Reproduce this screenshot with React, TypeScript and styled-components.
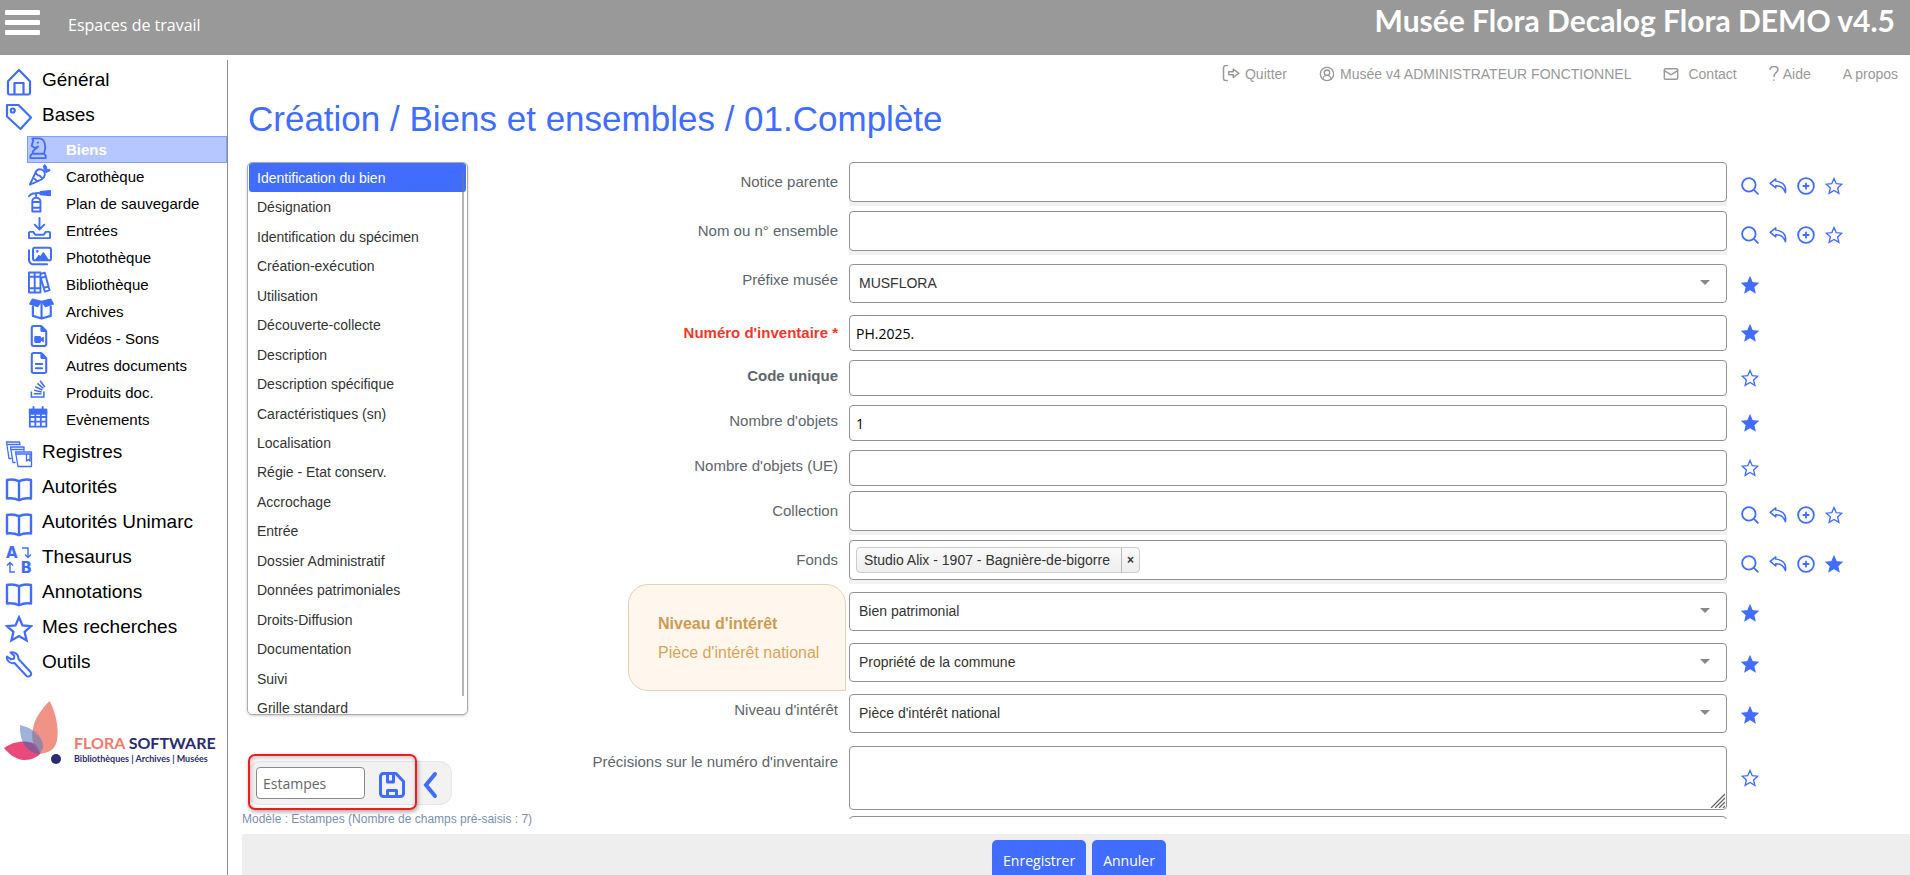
import React from "react";
import styled, { createGlobalStyle, css } from "styled-components";
import { FaRegImages, FaRegFileVideo, FaRegFileLines, FaStackOverflow } from "react-icons/fa6";
import { CircleUserRound, Mail } from "lucide-react";

const blue = "#416dff";
const sans = `"Liberation Sans", Arial, sans-serif`;
const humanist = `"Open Sans", "Noto Sans", sans-serif`;

const GlobalStyle = createGlobalStyle`
  * { box-sizing: border-box; }
  body { margin: 0; background: #fff; font-family: ${sans}; font-size: 14px; color: #333; }
  ul { list-style: none; margin: 0; padding: 0; }
  a { color: inherit; text-decoration: none; }
  button { padding: 0; border: 0; background: none; cursor: pointer; font: inherit; }
  svg { display: block; flex: none; }
`;

const Page = styled.div`
  display: flex;
  flex-direction: column;
  height: 100vh;
  overflow: hidden;
`;

/* ---------- header ---------- */

const Header = styled.header`
  display: flex;
  justify-content: space-between;
  flex: none;
  height: 55px;
  padding: 0 15px 0 5px;
  background: #999;
  color: #fff;
`;
const HeaderLeft = styled.div`
  display: flex;
  align-items: flex-start;
  gap: 28px;
  padding-top: 10px;
`;
const MenuButton = styled.button`
  display: flex;
  flex-direction: column;
  gap: 5px;
  width: 35px;
`;
const MenuBar = styled.span`
  height: 5px;
  width: 100%;
  border-radius: 1px;
  background: #fff;
`;
const Workspace = styled.a`
  font: 16px/30px ${humanist};
`;
const SiteName = styled.div`
  font: bold 30px/40px Lato, sans-serif;
`;

/* ---------- side menu ---------- */

const Columns = styled.div`
  display: flex;
  flex: 1;
  min-height: 0;
`;
const Sidebar = styled.nav`
  flex: none;
  width: 228px;
  margin-top: 5px;
  border-right: 1px solid #8f8f8f;
  color: #000;
`;
const SectionLink = styled.a`
  display: flex;
  gap: 9px;
  height: 35px;
  padding-left: 5px;
  font-size: 19px;
  svg { margin-top: 8px; color: ${blue}; }
`;
const SectionText = styled.span`
  padding-top: 5px;
  line-height: 29px;
  white-space: nowrap;
`;
const SubMenu = styled.ul`
  margin: 6px 0 -1px 27px;
`;
const SubLink = styled.a<{ $active?: boolean }>`
  display: flex;
  align-items: flex-start;
  height: 27px;
  padding-left: 1px;
  font-size: 15px;
  line-height: 25px;
  ${(p) => p.$active && css`
    background: #b5c7fe;
    box-shadow: inset 0 0 0 1px #7f9dfb;
    color: #fff;
    font-weight: bold;
  `}
`;
const SubIcon = styled.span`
  width: 38px;
  color: ${blue};
`;
const SubText = styled.span`
  padding-top: 1px;
`;
const Brand = styled.a`
  display: flex;
  align-items: flex-end;
  gap: 12px;
  margin-top: 22px;
  padding-left: 2px;
`;
const BrandText = styled.span`
  display: flex;
  flex-direction: column;
  padding-bottom: 1px;
  color: #2b2c6f;
`;
const BrandName = styled.span`
  font: bold 16px/18px Lato, sans-serif;
  white-space: nowrap;
  em { font-style: normal; color: #f0796c; }
`;
const BrandTag = styled.span`
  font: bold 9px/14px Lato, sans-serif;
  white-space: nowrap;
`;

/* ---------- main area ---------- */

const Main = styled.main`
  display: flex;
  flex-direction: column;
  flex: 1;
  min-width: 0;
  padding: 9px 0 0 14px;
`;
const UserNav = styled.nav`
  display: flex;
  justify-content: flex-end;
  gap: 32px;
  padding-right: 12px;
  color: #999;
  line-height: 20px;
`;
const UserLink = styled.a<{ $gap?: number }>`
  display: flex;
  align-items: center;
  gap: ${(p) => p.$gap ?? 5}px;
`;
const Title = styled.h1`
  margin: 15px 0 23px 6px;
  font-size: 35px;
  font-weight: normal;
  line-height: 40px;
  color: ${blue};
`;
const Body = styled.div`
  display: flex;
  flex: 1;
  min-height: 0;
`;
const Aside = styled.div`
  display: flex;
  flex-direction: column;
  flex: none;
  width: 226px;
  padding-bottom: 6px;
`;
const TabBox = styled.div`
  position: relative;
  flex: 1;
  min-height: 0;
  margin-left: 5px;
  padding: 0 1px;
  overflow: hidden;
  border: 1px solid #aaa;
  border-radius: 5px;
  box-shadow: 0 1px 3px rgba(0, 0, 0, 0.2);
`;
const TabList = styled.ul`
  display: grid;
  grid-template-rows: repeat(19, 1fr);
  height: 560px;
`;
const TabLink = styled.a<{ $active?: boolean }>`
  display: flex;
  align-items: center;
  height: 100%;
  padding-left: 8px;
  border-radius: 3px;
  ${(p) => p.$active && css`
    background: ${blue};
    color: #fff;
  `}
`;
const ScrollThumb = styled.div`
  position: absolute;
  top: 10px;
  right: 3px;
  bottom: 18px;
  width: 2px;
  background: rgba(120, 120, 120, 0.55);
`;
const ModelBar = styled.form`
  position: relative;
  display: flex;
  align-items: center;
  gap: 13px;
  width: 204px;
  height: 44px;
  margin: 46px 0 5px 6px;
  padding-left: 7px;
  border: 1px solid #e6e6e6;
  border-radius: 12px;
  background: #f2f2f2;
`;
const ModelInput = styled.input`
  width: 109px;
  height: 32px;
  padding: 0 6px;
  border: 1px solid #8a8a8a;
  border-radius: 4px;
  background: #fff;
  color: #666;
  font: 14px ${humanist};
`;
const ModelButton = styled.button`
  padding-top: 3px;
  color: ${blue};
`;
const Highlight = styled.span`
  position: absolute;
  inset: -8px 34px -6px -1px;
  border: 2px solid #ee1c1c;
  border-radius: 7px;
  box-shadow: 1px 2px 4px rgba(0, 0, 0, 0.35), inset 1px 2px 5px rgba(0, 0, 0, 0.22);
  pointer-events: none;
`;
const ModelNote = styled.p`
  margin: 0;
  font-size: 12px;
  line-height: 18px;
  color: #7b8fb0;
  white-space: nowrap;
`;

/* ---------- form ---------- */

const Form = styled.form`
  flex: 1;
  min-width: 0;
  margin-bottom: 15px;
  overflow: hidden;
`;
const Group = styled.div<{ $before?: number; $gap?: number }>`
  position: relative;
  display: flex;
  flex-direction: column;
  gap: ${(p) => p.$gap ?? 0}px;
  margin-top: ${(p) => p.$before ?? 0}px;
`;
const Row = styled.div`
  display: grid;
  grid-template-columns: 370px minmax(0, 1fr) 168px;
  column-gap: 11px;
  padding-right: 4px;
`;
const Label = styled.label<{ $tone?: "strong" | "required"; $low?: boolean }>`
  padding-top: ${(p) => (p.$low ? 10 : 6)}px;
  font-size: 15px;
  line-height: 20px;
  text-align: right;
  color: #5d666b;
  ${(p) => p.$tone && css`font-weight: bold;`}
  ${(p) => p.$tone === "required" && css`color: #f0382b; padding-top: 8px;`}
`;
const control = css`
  display: block;
  width: 100%;
  border: 1px solid #929292;
  border-radius: 4px;
  background: #fff;
`;
const TextInput = styled.input`
  ${control}
  height: 36px;
  padding: 0 6px;
  color: #000;
  font: 14px ${humanist};
`;
const LookupShell = styled.div`
  padding-bottom: 4px;
  background: linear-gradient(#fff 50%, #f1f1f1 50%);
`;
const LookupBox = styled.div`
  ${control}
  display: flex;
  align-items: center;
  height: 40px;
  padding: 0 6px;
`;
const LookupInput = styled.input`
  flex: 1;
  min-width: 0;
  height: 30px;
  border: 0;
  outline: 0;
  background: none;
  font: 14px ${sans};
`;
const Chip = styled.span`
  display: flex;
  height: 26px;
  border: 1px solid #ccc;
  border-radius: 4px;
  background: linear-gradient(#fafafa, #eee);
  line-height: 24px;
  white-space: nowrap;
`;
const ChipText = styled.span`
  padding: 0 11px 0 7px;
`;
const ChipClose = styled.button`
  width: 18px;
  border-left: 1px solid #bbb;
  font-size: 12px;
  font-weight: bold;
  line-height: 24px;
  color: #333;
`;
const SelectShell = styled.div`
  position: relative;
`;
const Select = styled.select`
  ${control}
  height: 39px;
  padding: 0 30px 1px 9px;
  appearance: none;
  color: #333;
  font: 14px ${sans};
`;
const Arrow = styled.span`
  position: absolute;
  top: 16px;
  right: 17px;
  border: 5px solid transparent;
  border-top-color: #888;
  border-bottom: 0;
  pointer-events: none;
`;
const TextArea = styled.textarea`
  ${control}
  height: 64px;
  resize: none;
`;
const AreaShell = styled.div`
  position: relative;
`;
const Grip = styled.svg`
  position: absolute;
  right: 2px;
  bottom: 2px;
  pointer-events: none;
`;
const Actions = styled.div<{ $low?: boolean }>`
  display: flex;
  align-items: center;
  gap: 10px;
  padding: ${(p) => (p.$low ? 3 : 0)}px 0 0 3px;
`;
const ActionButton = styled.button`
  display: grid;
  place-items: center;
  width: 18px;
  height: 18px;
  color: ${blue};
`;
const Callout = styled.aside`
  position: absolute;
  top: -8px;
  left: 160px;
  width: 218px;
  height: 107px;
  padding: 24px 29px;
  border: 1px solid #e6d2b2;
  border-radius: 20px 20px 0 20px;
  background: #fff7ee;
  color: #d8a45b;
  font-size: 16px;
  line-height: 29px;
  white-space: nowrap;
`;
const CalloutTitle = styled.strong`
  display: block;
  color: #cf9a50;
`;
const Footer = styled.footer`
  display: flex;
  justify-content: center;
  align-items: flex-start;
  gap: 6px;
  flex: none;
  height: 41px;
  padding: 6px 0 0 6px;
  background: #eee;
`;
const PrimaryButton = styled.button`
  flex: none;
  height: 40px;
  padding: 0 11px;
  border-radius: 5px;
  background: ${blue};
  color: #fff;
  font: 14px ${humanist};
`;

/* ---------- icons ---------- */

type DrawProps = { size?: number; box?: number; width?: number; children: React.ReactNode };
const Draw = ({ size = 22, box = 24, width = 2, children }: DrawProps) => (
  <svg width={size} height={size} viewBox={`0 0 ${box} ${box}`} fill="none" stroke="currentColor"
    strokeWidth={width} strokeLinejoin="round" strokeLinecap="round" aria-hidden="true">
    {children}
  </svg>
);

const HomeIcon = () => (
  <Draw size={28} box={28} width={2.2}>
    <path d="M3 13.200 14 2l11 11.200V25a1.500 1.500 0 0 1-1.500 1.500h-19A1.500 1.500 0 0 1 3 25zM9.500 26V15h9v11" />
  </Draw>
);
const TagIcon = () => (
  <Draw size={28} box={28} width={2.2}><path d="M2 2h11.500L26 14.500 15.500 26 2 13.500z" /><circle cx="7.800" cy="7.500" r="2" /></Draw>
);
const RegistersIcon = () => (
  <Draw size={28} box={28} width={1.3}>
    <path d="M6 18.500H4L1.500 2h13l.5 2.500M1.800 4.500H14M10 22.500H8L5.500 7h13.500v3.500M5.700 9.500H19" />
    <path d="M10.500 12h16v14.500H13zM10.700 14h15.800M21.500 14v7l2-1.500 1.500 1.500v-7" />
  </Draw>
);
const BookIcon = () => (
  <Draw size={28} box={28} width={2.4}><path d="M2 5c4.500-1 8.500-.5 12 1.200C17.500 4.500 21.500 4 26 5v18.500c-4.500-.5-8.500 0-12 1.800-3.500-1.800-7.500-2.300-12-1.800zM14 6.500V25" /></Draw>
);
const ThesaurusIcon = () => (
  <svg width="28" height="28" viewBox="0 0 28 28" overflow="visible" aria-hidden="true">
    <g fill="currentColor" fontFamily="DejaVu Sans" fontWeight="bold" fontSize="15">
      <text x="1" y="13">A</text><text x="15.500" y="27.500">B</text>
    </g>
    <path d="M17 3h6v9M20 9.500l3 3 3-3M10 27H5v-9M2 20.500l3-3 3 3" fill="none" stroke="currentColor" strokeWidth="1.400" />
  </svg>
);
const WrenchIcon = () => (
  <Draw size={28} box={28} width={2}>
    <path d="M5.500 2.500c4-1.200 8.500 2 7.800 6.300L25.500 22c2 3-1.500 6-4.200 3.800L9.500 13C5 14 1.200 10.500 2 6.500l4 2.900 3-.7.300-2.900z" />
  </Draw>
);
const starPath = "M12 2l3 6.900 7.300.7-5.500 4.900 1.700 7.300L12 18l-6.500 3.800 1.700-7.300-5.500-4.900 7.300-.7z";
const Star = ({ size = 18, filled = false, width = 1.8 }: { size?: number; filled?: boolean; width?: number }) => (
  <Draw size={size} width={width}><path d={starPath} fill={filled ? "currentColor" : "none"} strokeLinejoin="miter" /></Draw>
);

const KnightIcon = () => (
  <Draw size={23} width={1.9}>
    <path d="M2.500 23h16v-2.500l-2-2H4.500l-2 2zM5 17.500v-1.500l4.500-4M17 17.500c2-6 1.500-15-6-15H4.500l1 2.500C4.500 6.500 4.500 8 4 10.500l3 2L10.500 11" />
    <path d="M10 7h.5" />
  </Draw>
);
const CarrotIcon = () => (
  <Draw size={23}><path d="M2 22.500 8 9.500c3-5 10-3 9.500 3-.5 4-4 5-15.500 10zM8 10.500l2.500 2.500M7 16.500l2 2M12 13l2 2" /><path d="M17 7.500l-1-4L17.500 1.500l2 3V7l3-.5.500 1.500-4 2z" fill="currentColor" strokeWidth="1" /></Draw>
);
const ExtinguisherIcon = () => (
  <Draw size={23}><path d="M4.500 22.500V12c0-2 1.500-4 3.500-4h1c2 0 4 2 4 4v10.500zM5 12.500h8M5 18.500h8M8.500 7.500V3M1 6.500c2-3 5-3.500 12-3.500" /><path d="M13 2l10-1v4.500l-10-1z" fill="currentColor" /></Draw>
);
const TrayIcon = () => (
  <Draw size={23}><path d="M12 1v11.500M7 8l5 5 5-5M5.500 15.500H2c-1 0-1 0-1 1V22h22v-5.500c0-1 0-1-1-1h-3.500l-2 3h-9z" /></Draw>
);
const BooksIcon = () => (
  <Draw size={23}><path d="M1 1.500h6v21H1zM7 1.500h6v21H7zM1 6h12M1 18h12M13 3l4.500-1.200L22.500 20 17.500 21.500 13 6M14 7l4.500-1.200M16.500 17.500l5-1.200" /></Draw>
);
const BoxIcon = () => (
  <Draw size={26}><path d="M4.500 8v8.500l8 2.500 8.500-2.500V8M12.500 4.500V19" /><path d="M4 1l8.500 2L9 8 1.500 5.500zM21 1l-8.500 2L16 8l7.500-2.500z" fill="currentColor" strokeWidth="1" /></Draw>
);
const CalendarIcon = () => (
  <Draw size={22}>
    <path d="M2 4h18v18.500H2zM2 12h18M2 17h18M8 9v13M14 9v13M6 1v3M16 1v3" />
    <path d="M2 4h18v4.500H2z" fill="currentColor" />
  </Draw>
);

const SearchIcon = () => <Draw size={18} width={2.4}><circle cx="10.500" cy="10.500" r="9" /><path d="M17.500 17.500l5 5" /></Draw>;
const ReplyIcon = () => (
  <Draw size={18} width={2}><path d="M9 2.500 1.500 8.500 9 14.500V11.500c6 0 10 2 13 9.500C23.500 11 18 6 9 5.500z" /></Draw>
);
const PlusIcon = () => <Draw size={18} width={2.4}><circle cx="12" cy="12" r="10.500" /><path d="M12 8.500v7M8.500 12h7" /></Draw>;
const SaveIcon = () => (
  <Draw size={28} box={28} width={3}><path d="M2.500 5.500a3 3 0 0 1 3-3H18l7.500 8V22.500a3 3 0 0 1-3 3h-17a3 3 0 0 1-3-3zM9.500 3v8h6V3M9.500 25v-5.500h9V25" /></Draw>
);
const ChevronIcon = () => (
  <svg width="20" height="28" viewBox="0 0 20 28" fill="none" stroke="currentColor" strokeWidth="4" strokeLinecap="round" aria-hidden="true">
    <path d="M16 3 7 14l9 11" />
  </svg>
);
const QuitIcon = () => (
  <Draw size={18} width={2}><path d="M7 .8H5a3 3 0 0 0-3 3v14a3 3 0 0 0 3 3h2M9 9h6V5.500l7.500 5.500-7.500 5.500V13H9z" /></Draw>
);
const HelpIcon = () => (
  <svg width="10" height="16" viewBox="0 0 10 16" fill="none" stroke="currentColor" strokeWidth="1.500" strokeLinecap="round" aria-hidden="true">
    <path d="M1 3.500c0-4 8-4 8 .2C9 6.500 5 6.500 5 10.500M5 14v.2" />
  </svg>
);
const FloraLogo = () => (
  <svg width="60" height="68" viewBox="1 699 60 68" aria-hidden="true">
    <path d="M3 748c9-7 22-8 28-5 4 3 8 8 8 11-5 5-11 6-17 6-8-1-14-6-19-12z" fill="#ea4a79" />
    <path d="M48.500 701C57 716 59 738 54 746c-3 5-8 7-15 8-8-8-9-19-7-25 1-10 9-20 16.500-28z" fill="#f19286" />
    <path d="M19 725c13 3 24 12 23 23l-3 6c-10 0-21-9-20-29z" fill="#5f7fbd" fillOpacity=".6" />
    <path d="M22 742c4 0 10 0 13 3 3 4 4 6 4 9-7 0-14-5-17-12z" fill="#8d4a8c" fillOpacity=".6" />
    <circle cx="55" cy="759" r="5" fill="#2b2c6f" />
  </svg>
);

/* ---------- data ---------- */

const subItems: [string, React.ReactNode][] = [
  ["Biens", <KnightIcon />],
  ["Carothèque", <CarrotIcon />],
  ["Plan de sauvegarde", <ExtinguisherIcon />],
  ["Entrées", <TrayIcon />],
  ["Photothèque", <FaRegImages size={24} />],
  ["Bibliothèque", <BooksIcon />],
  ["Archives", <BoxIcon />],
  ["Vidéos - Sons", <FaRegFileVideo size={22} />],
  ["Autres documents", <FaRegFileLines size={22} />],
  ["Produits doc.", <FaStackOverflow size={20} />],
  ["Evènements", <CalendarIcon />],
];
const sections: [string, React.ReactNode][] = [
  ["Registres", <RegistersIcon />],
  ["Autorités", <BookIcon />],
  ["Autorités Unimarc", <BookIcon />],
  ["Thesaurus", <ThesaurusIcon />],
  ["Annotations", <BookIcon />],
  ["Mes recherches", <Star size={28} width={2} />],
  ["Outils", <WrenchIcon />],
];
const tabs = [
  "Identification du bien", "Désignation", "Identification du spécimen", "Création-exécution", "Utilisation",
  "Découverte-collecte", "Description", "Description spécifique", "Caractéristiques (sn)", "Localisation",
  "Régie - Etat conserv.", "Accrochage", "Entrée", "Dossier Administratif", "Données patrimoniales",
  "Droits-Diffusion", "Documentation", "Suivi", "Grille standard",
];

/* ---------- form parts ---------- */

const Favourite = ({ on }: { on?: boolean }) => (
  <ActionButton type="button" aria-label="Favori" aria-pressed={!!on}><Star filled={on} /></ActionButton>
);

const Lookup = ({ id, label, chip, fav }: { id: string; label: string; chip?: string; fav?: boolean }) => (
  <Row>
    <Label htmlFor={id} $low>{label}</Label>
    <LookupShell>
      <LookupBox>
        {chip && <Chip><ChipText>{chip}</ChipText><ChipClose type="button" aria-label="Retirer">×</ChipClose></Chip>}
        <LookupInput id={id} />
      </LookupBox>
    </LookupShell>
    <Actions $low>
      <ActionButton type="button" aria-label="Rechercher"><SearchIcon /></ActionButton>
      <ActionButton type="button" aria-label="Reprendre"><ReplyIcon /></ActionButton>
      <ActionButton type="button" aria-label="Ajouter"><PlusIcon /></ActionButton>
      <Favourite on={fav} />
    </Actions>
  </Row>
);

const Choice = ({ id, label, value, hideLabel }: { id: string; label: string; value: string; hideLabel?: boolean }) => (
  <Row>
    {hideLabel ? <span /> : <Label htmlFor={id}>{label}</Label>}
    <SelectShell>
      <Select id={id} aria-label={hideLabel ? label : undefined}><option>{value}</option></Select>
      <Arrow />
    </SelectShell>
    <Actions $low><Favourite on /></Actions>
  </Row>
);

const Text = ({ id, label, value, tone, fav }: { id: string; label: string; value?: string; tone?: "strong" | "required"; fav?: boolean }) => (
  <Row>
    <Label htmlFor={id} $tone={tone}>{label}</Label>
    <TextInput id={id} defaultValue={value} />
    <Actions><Favourite on={fav} /></Actions>
  </Row>
);

export default function App() {
  return (
    <Page>
      <GlobalStyle />
      <Header>
        <HeaderLeft>
          <MenuButton aria-label="Menu"><MenuBar /><MenuBar /><MenuBar /></MenuButton>
          <Workspace href="#">Espaces de travail</Workspace>
        </HeaderLeft>
        <SiteName>Musée Flora Decalog Flora DEMO v4.5</SiteName>
      </Header>
      <Columns>
        <Sidebar>
          <SectionLink href="#"><HomeIcon /><SectionText>Général</SectionText></SectionLink>
          <SectionLink href="#"><TagIcon /><SectionText>Bases</SectionText></SectionLink>
          <SubMenu>
            {subItems.map(([name, icon], i) => (
              <li key={name}>
                <SubLink href="#" $active={i === 0}><SubIcon>{icon}</SubIcon><SubText>{name}</SubText></SubLink>
              </li>
            ))}
          </SubMenu>
          {sections.map(([name, icon]) => (
            <SectionLink href="#" key={name}>{icon}<SectionText>{name}</SectionText></SectionLink>
          ))}
          <Brand href="#">
            <FloraLogo />
            <BrandText>
              <BrandName><em>FLORA</em> SOFTWARE</BrandName>
              <BrandTag>Bibliothèques | Archives | Musées</BrandTag>
            </BrandText>
          </Brand>
        </Sidebar>
        <Main>
          <UserNav>
            <UserLink href="#"><QuitIcon />Quitter</UserLink>
            <UserLink href="#"><CircleUserRound size={16} />Musée v4 ADMINISTRATEUR FONCTIONNEL</UserLink>
            <UserLink href="#" $gap={9}><Mail size={16} strokeWidth={2.2} />Contact</UserLink>
            <UserLink href="#" $gap={4}><HelpIcon />Aide</UserLink>
            <UserLink href="#">A propos</UserLink>
          </UserNav>
          <Title>Création / Biens et ensembles / 01.Complète</Title>
          <Body>
            <Aside>
              <TabBox>
                <TabList>
                  {tabs.map((t, i) => <li key={t}><TabLink href="#" $active={i === 0}>{t}</TabLink></li>)}
                </TabList>
                <ScrollThumb />
              </TabBox>
              <ModelBar>
                <ModelInput aria-label="Nom du modèle" defaultValue="Estampes" />
                <ModelButton type="button" aria-label="Enregistrer le modèle"><SaveIcon /></ModelButton>
                <ModelButton type="button" aria-label="Replier"><ChevronIcon /></ModelButton>
                <Highlight />
              </ModelBar>
              <ModelNote>Modèle : Estampes (Nombre de champs pré-saisis : 7)</ModelNote>
            </Aside>
            <Form>
              <Group $gap={5}>
                <Lookup id="parent" label="Notice parente" />
                <Lookup id="set" label="Nom ou n° ensemble" />
              </Group>
              <Group $before={9}>
                <Choice id="prefix" label="Préfixe musée" value="MUSFLORA" />
              </Group>
              <Group $before={12} $gap={9}>
                <Text id="number" label="Numéro d'inventaire *" value="PH.2025." tone="required" fav />
                <Text id="code" label="Code unique" tone="strong" />
                <Text id="count" label="Nombre d'objets" value="1" fav />
                <Text id="countUe" label="Nombre d'objets (UE)" />
              </Group>
              <Group $before={5} $gap={5}>
                <Lookup id="collection" label="Collection" />
                <Lookup id="fonds" label="Fonds" chip="Studio Alix - 1907 - Bagnière-de-bigorre" fav />
              </Group>
              <Group $before={8} $gap={12}>
                <Choice id="kind" label="Type de bien" value="Bien patrimonial" hideLabel />
                <Choice id="owner" label="Propriété" value="Propriété de la commune" hideLabel />
                <Choice id="level" label="Niveau d'intérêt" value="Pièce d'intérêt national" />
                <Callout>
                  <CalloutTitle>Niveau d'intérêt</CalloutTitle>
                  Pièce d'intérêt national
                </Callout>
              </Group>
              <Group $before={13} $gap={6}>
                <Row>
                  <Label htmlFor="details">Précisions sur le numéro d'inventaire</Label>
                  <AreaShell>
                    <TextArea id="details" />
                    <Grip width="15" height="15" viewBox="0 0 15 15" stroke="#666" strokeWidth="1.300">
                      <path d="M1 15 15 1M5 15 15 5M9 15l6-6M13 15l2-2" />
                    </Grip>
                  </AreaShell>
                  <Actions><Favourite /></Actions>
                </Row>
                <Row>
                  <span />
                  <TextArea aria-label="Suite" />
                </Row>
              </Group>
            </Form>
          </Body>
          <Footer>
            <PrimaryButton type="button">Enregistrer</PrimaryButton>
            <PrimaryButton type="button">Annuler</PrimaryButton>
          </Footer>
        </Main>
      </Columns>
    </Page>
  );
}
